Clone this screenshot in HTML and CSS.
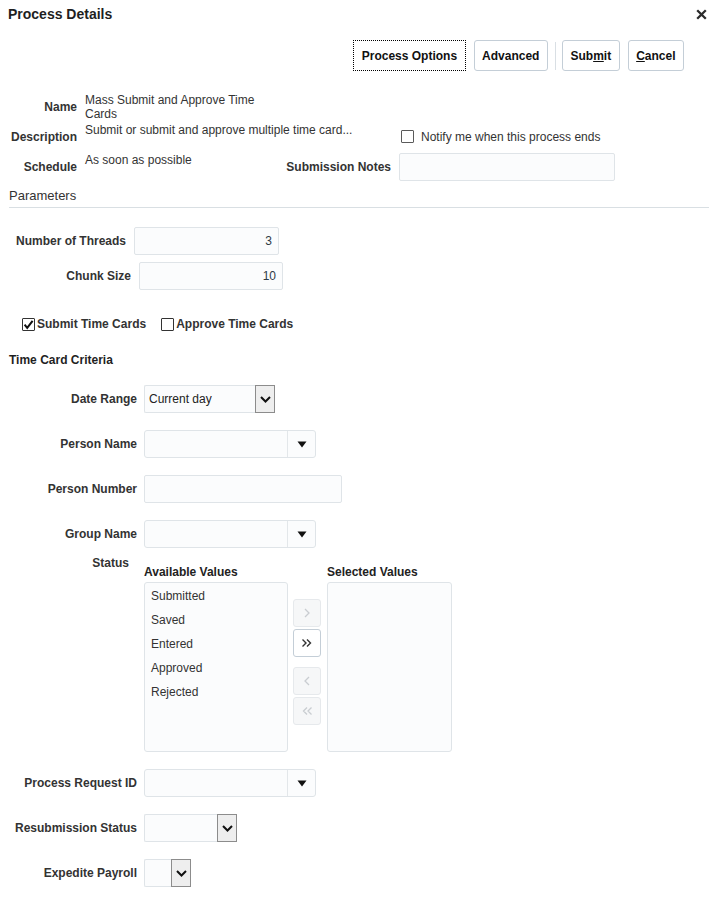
FILE: index.html
```html
<!DOCTYPE html>
<html lang="en">
<head>
<meta charset="utf-8">
<title>Process Details</title>
<link rel="stylesheet" href="styles.css">
</head>
<body>
<div class="dialog">
  <div class="titlebar">
    <h1 class="title">Process Details</h1>
    <span class="close" aria-label="Close">
      <svg width="11" height="11" viewBox="0 0 11 11"><path d="M1.2 1.2 L9.8 9.8 M9.8 1.2 L1.2 9.8" stroke="#2b2b2b" stroke-width="2.3" fill="none"/></svg>
    </span>
  </div>

  <div class="toolbar">
    <button class="btn btn-focus">Process Options</button>
    <button class="btn">Advanced</button>
    <span class="tb-sep"></span>
    <button class="btn">Sub<u>m</u>it</button>
    <button class="btn"><u>C</u>ancel</button>
  </div>

  <div class="details">
    <div class="lbl r1">Name</div>
    <div class="val r1">Mass Submit and Approve Time Cards</div>
    <div class="lbl r2">Description</div>
    <div class="val r2 nowrap">Submit or submit and approve multiple time card...</div>
    <div class="notify r2">
      <span class="cb"></span>
      <span>Notify me when this process ends</span>
    </div>
    <div class="lbl r3">Schedule</div>
    <div class="val r3">As soon as possible</div>
    <div class="lbl lbl2 r3">Submission Notes</div>
    <div class="input notes r3"></div>
  </div>

  <h2 class="section">Parameters</h2>

  <div class="prow prow-threads">
    <div class="plbl">Number of Threads</div>
    <div class="input num">3</div>
  </div>
  <div class="prow prow-chunk">
    <div class="plbl">Chunk Size</div>
    <div class="input num">10</div>
  </div>

  <div class="checks">
    <label class="check">
      <span class="cb cb-dark">
        <svg width="13" height="13" viewBox="0 0 13 13"><path d="M2.6 6.6 L5.2 9.8 L10.6 2.8" stroke="#111" stroke-width="2" fill="none"/></svg>
      </span>
      <span>Submit Time Cards</span>
    </label>
    <label class="check">
      <span class="cb cb-dark"></span>
      <span>Approve Time Cards</span>
    </label>
  </div>

  <h3 class="subhead">Time Card Criteria</h3>

  <div class="criteria">
    <div class="crow">
      <div class="clbl">Date Range</div>
      <div class="select sel-date">
        <span class="sel-text">Current day</span>
        <span class="sel-arrow"><svg width="11" height="7" viewBox="0 0 11 7"><path d="M1 1 L5.5 5.5 L10 1" stroke="#111" stroke-width="2" fill="none"/></svg></span>
      </div>
    </div>
    <div class="crow">
      <div class="clbl">Person Name</div>
      <div class="lov">
        <span class="lov-text"></span>
        <span class="lov-btn"><svg width="10" height="7" viewBox="0 0 10 7"><path d="M0.5 0.5 H9.5 L5 6.5 Z" fill="#111"/></svg></span>
      </div>
    </div>
    <div class="crow">
      <div class="clbl">Person Number</div>
      <div class="input pnum"></div>
    </div>
    <div class="crow crow-tight">
      <div class="clbl">Group Name</div>
      <div class="lov">
        <span class="lov-text"></span>
        <span class="lov-btn"><svg width="10" height="7" viewBox="0 0 10 7"><path d="M0.5 0.5 H9.5 L5 6.5 Z" fill="#111"/></svg></span>
      </div>
    </div>
    <div class="crow crow-status">
      <div class="clbl">Status</div>
      <div class="shuttle">
        <div class="list-col">
          <div class="list-head">Available Values</div>
          <ul class="list list-avail">
            <li>Submitted</li>
            <li>Saved</li>
            <li>Entered</li>
            <li>Approved</li>
            <li>Rejected</li>
          </ul>
        </div>
        <div class="shuttle-btns">
          <span class="sbtn disabled"><svg width="12" height="12" viewBox="0 0 12 12"><path d="M4 2 L8 6 L4 10" stroke="currentColor" stroke-width="1.3" fill="none"/></svg></span>
          <span class="sbtn"><svg width="14" height="12" viewBox="0 0 14 12"><path d="M2.5 2.5 L6 6 L2.5 9.5 M7 2.5 L10.5 6 L7 9.5" stroke="currentColor" stroke-width="1.4" fill="none"/></svg></span>
          <span class="sbtn disabled gap"><svg width="12" height="12" viewBox="0 0 12 12"><path d="M8 2 L4 6 L8 10" stroke="currentColor" stroke-width="1.3" fill="none"/></svg></span>
          <span class="sbtn disabled"><svg width="14" height="12" viewBox="0 0 14 12"><path d="M7 2.5 L3.5 6 L7 9.5 M11.5 2.5 L8 6 L11.5 9.5" stroke="currentColor" stroke-width="1.3" fill="none"/></svg></span>
        </div>
        <div class="list-col">
          <div class="list-head">Selected Values</div>
          <ul class="list list-sel"></ul>
        </div>
      </div>
    </div>
    <div class="crow">
      <div class="clbl">Process Request ID</div>
      <div class="lov">
        <span class="lov-text"></span>
        <span class="lov-btn"><svg width="10" height="7" viewBox="0 0 10 7"><path d="M0.5 0.5 H9.5 L5 6.5 Z" fill="#111"/></svg></span>
      </div>
    </div>
    <div class="crow">
      <div class="clbl">Resubmission Status</div>
      <div class="select sel-resub">
        <span class="sel-text"></span>
        <span class="sel-arrow"><svg width="11" height="7" viewBox="0 0 11 7"><path d="M1 1 L5.5 5.5 L10 1" stroke="#111" stroke-width="2" fill="none"/></svg></span>
      </div>
    </div>
    <div class="crow">
      <div class="clbl">Expedite Payroll</div>
      <div class="select sel-exp">
        <span class="sel-text"></span>
        <span class="sel-arrow"><svg width="11" height="7" viewBox="0 0 11 7"><path d="M1 1 L5.5 5.5 L10 1" stroke="#111" stroke-width="2" fill="none"/></svg></span>
      </div>
    </div>
  </div>
</div>
</body>
</html>
```

FILE: styles.css
```css
* { box-sizing: border-box; }

html, body {
  margin: 0;
  padding: 0;
  background: #ffffff;
}

body {
  font-family: "Liberation Sans", Arial, sans-serif;
  font-size: 12px;
  line-height: 14px;
  color: #333333;
}

.dialog {
  width: 720px;
  padding: 0 0 0 8px;
}

/* Title bar */
.titlebar {
  display: flex;
  justify-content: space-between;
  align-items: center;
  height: 28px;
  padding-right: 13px;
}

.title {
  margin: 0;
  font-size: 14px;
  font-weight: bold;
  line-height: 16px;
  color: #1f1f1f;
}

.close {
  display: flex;
  width: 11px;
  height: 11px;
}

/* Toolbar */
.toolbar {
  display: flex;
  justify-content: flex-end;
  align-items: center;
  gap: 8px;
  margin-top: 12px;
  padding-right: 36px;
  height: 31px;
}

.btn {
  height: 31px;
  padding: 0 7.5px;
  border: 1px solid #c4ced7;
  border-radius: 3px;
  background: #ffffff;
  font-family: "Liberation Sans", Arial, sans-serif;
  font-size: 12px;
  font-weight: bold;
  color: #111111;
  cursor: pointer;
}

.btn-focus {
  border: 1px dotted #000000;
  border-radius: 0;
}

.tb-sep {
  width: 1px;
  height: 28px;
  background: #d9dfe4;
  margin: 0 -2px 0 -1px;
}

/* Details grid */
.details {
  display: grid;
  grid-template-columns: 69px 186px 112px 216px;
  grid-template-rows: 28px 28px 28px;
  column-gap: 8px;
  row-gap: 2px;
  margin-top: 22px;
}

.r1 { grid-row: 1; }
.r2 { grid-row: 2; }
.r3 { grid-row: 3; }

.lbl {
  grid-column: 1;
  align-self: center;
  text-align: right;
  font-weight: bold;
  color: #333333;
  white-space: nowrap;
}

.lbl2 {
  grid-column: 3;
}

.val {
  grid-column: 2;
  align-self: start;
  color: #333333;
}

.nowrap {
  white-space: nowrap;
  grid-column: 2 / span 2;
}

.notify {
  grid-column: 4;
  align-self: center;
  display: flex;
  align-items: center;
  gap: 7px;
  margin-left: 2px;
  margin-top: -1px;
}

.notes {
  grid-column: 4;
  width: 216px;
}

.cb {
  display: inline-flex;
  width: 13px;
  height: 13px;
  border: 1px solid #5a5a5a;
  border-radius: 1px;
  background: #ffffff;
  flex: none;
}

.cb-dark {
  border-color: #333333;
  align-items: center;
  justify-content: center;
}

.cb svg {
  margin: -1px;
}

.input {
  height: 28px;
  border: 1px solid #dfe4e8;
  border-radius: 2px;
  background: #fbfcfd;
}

/* Parameters */
.section {
  margin: 7px 11px 0 1px;
  padding-bottom: 3px;
  font-size: 13px;
  font-weight: normal;
  line-height: 16px;
  color: #333333;
  border-bottom: 1px solid #d9dfe3;
}

.prow {
  display: flex;
  align-items: center;
  gap: 8px;
}

.prow-threads {
  margin-top: 19px;
}

.prow-chunk {
  margin-top: 7px;
}

.plbl {
  text-align: right;
  font-weight: bold;
}

.prow-threads .plbl { width: 118px; }
.prow-chunk .plbl { width: 123px; }

.num {
  text-align: right;
  padding: 0 6px;
  line-height: 26px;
  color: #2f3a45;
}

.prow-threads .num { width: 145px; }
.prow-chunk .num { width: 144px; }

/* Checkboxes */
.checks {
  display: flex;
  align-items: center;
  margin-top: 27px;
  margin-left: 14px;
  gap: 15px;
}

.check {
  display: flex;
  align-items: center;
  gap: 2px;
  font-weight: bold;
}

.subhead {
  margin: 22px 0 0 1px;
  font-size: 12px;
  font-weight: bold;
  line-height: 14px;
  color: #1f1f1f;
}

/* Criteria */
.criteria {
  margin-top: 18px;
  display: flex;
  flex-direction: column;
}

.crow {
  display: flex;
  align-items: center;
  gap: 7px;
  min-height: 28px;
  margin-bottom: 17px;
}

.crow-tight {
  margin-bottom: 8px;
}

.crow-status {
  align-items: flex-start;
}

.clbl {
  width: 129px;
  text-align: right;
  font-weight: bold;
  white-space: nowrap;
}

.crow-status .clbl {
  width: 121px;
  margin-right: 8px;
}

/* Select */
.select {
  display: flex;
  height: 28px;
}

.sel-text {
  flex: 1;
  border: 1px solid #dfe4e8;
  border-right: none;
  border-radius: 2px 0 0 2px;
  background: #fbfcfd;
  padding: 0 4px;
  line-height: 26px;
  color: #222222;
}

.sel-arrow {
  width: 20px;
  display: flex;
  align-items: center;
  justify-content: center;
  border: 1px solid #8c8c8c;
  background: #eeeeee;
}

.sel-date { width: 131px; }
.sel-resub { width: 93px; }
.sel-exp { width: 47px; }

/* LOV */
.lov {
  display: flex;
  width: 172px;
  height: 28px;
  border: 1px solid #dfe4e8;
  border-radius: 3px;
  background: #fbfcfd;
}

.lov-text {
  flex: 1;
}

.lov-btn {
  width: 28px;
  display: flex;
  align-items: center;
  justify-content: center;
  border-left: 1px solid #e3e7ea;
}

.pnum {
  width: 198px;
}

/* Shuttle */
.shuttle {
  display: flex;
  margin-top: 9px;
}

.list-col {
  display: flex;
  flex-direction: column;
}

.list-head {
  font-weight: bold;
  color: #222222;
  margin-bottom: 3px;
}

.list {
  list-style: none;
  margin: 0;
  padding: 1px 6px;
  height: 170px;
  border: 1px solid #dfe4e8;
  border-radius: 3px;
  background: #fbfcfd;
}

.list li {
  line-height: 24px;
  color: #333333;
}

.list-avail { width: 144px; }
.list-sel { width: 125px; }

.shuttle-btns {
  display: flex;
  flex-direction: column;
  gap: 2px;
  padding-top: 34px;
  margin: 0 6px 0 5px;
}

.sbtn {
  width: 28px;
  height: 28px;
  display: flex;
  align-items: center;
  justify-content: center;
  border: 1px solid #c4ced7;
  border-radius: 3px;
  background: #ffffff;
  color: #333333;
}

.sbtn.disabled {
  border-color: #e6e9ec;
  background: #f6f7f8;
  color: #c9cdd1;
}

.sbtn.gap {
  margin-top: 8px;
}
```
